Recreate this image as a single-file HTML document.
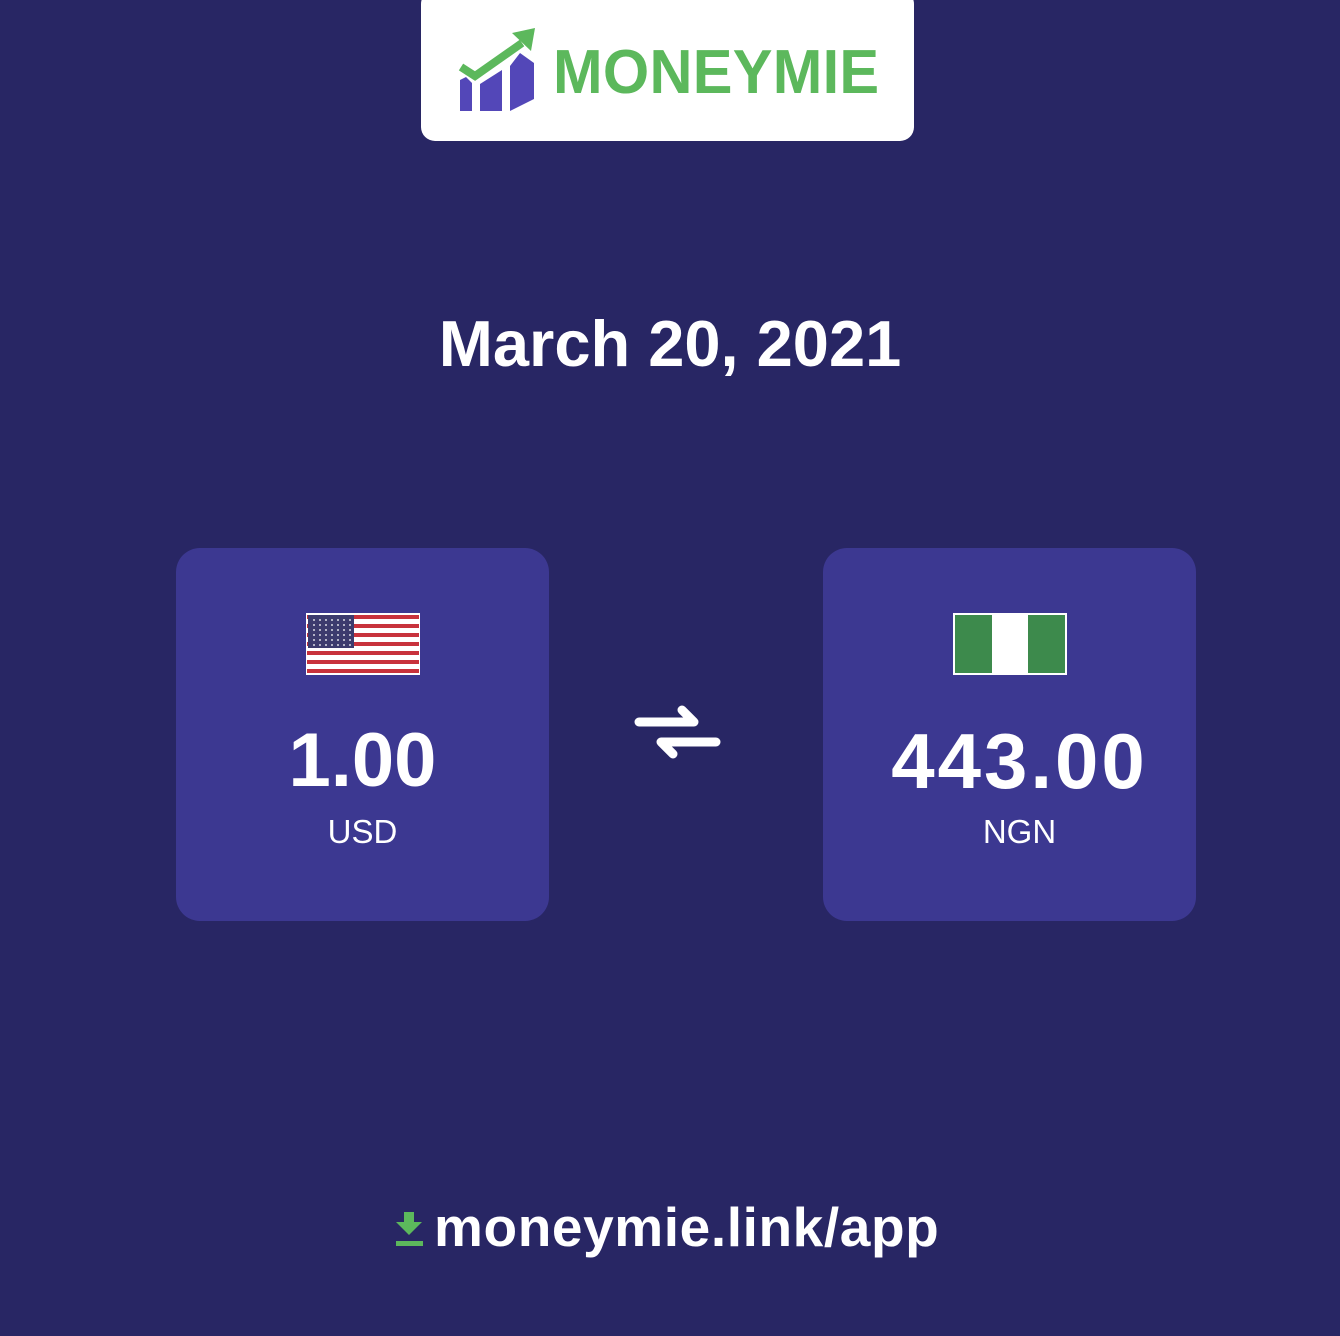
<!DOCTYPE html>
<html><head><meta charset="utf-8"><style>
html,body{margin:0;padding:0}
body{width:1340px;height:1336px;background:#282664;position:relative;overflow:hidden;font-family:"Liberation Sans",sans-serif;color:#fff}
.logo{position:absolute;left:421px;top:-10px;width:493px;height:151px;background:#fff;border-radius:14px}
.lt{position:absolute;left:553px;top:40px;font-size:62px;font-weight:bold;color:#5cb85c;letter-spacing:0.3px;transform:scaleX(0.96);transform-origin:left top;line-height:66px}
.date{position:absolute;left:0;width:1340px;top:304px;text-align:center;font-size:65px;font-weight:bold;line-height:80px}
.card{position:absolute;top:548px;width:373px;height:373px;background:#3c3891;border-radius:24px}
.num{position:absolute;left:0;width:100%;top:718px;text-align:center;font-size:76px;font-weight:bold;line-height:86px}
.cur{position:absolute;left:0;width:100%;top:812px;text-align:center;font-size:33px;line-height:40px}
.foot{position:absolute;left:434px;top:1192px;font-size:55px;font-weight:bold;line-height:70px;letter-spacing:0.6px}
</style></head><body>
<div class="logo"></div>
<svg style="position:absolute;left:0;top:0" width="1340" height="150">
<polyline points="461,67 475,76 522,43" fill="none" stroke="#5cb85c" stroke-width="8" stroke-linejoin="miter"/>
<polygon points="512,33 535,28 531,51" fill="#5cb85c"/>
<polygon points="460,80 466,77 472,83 472,111 460,111" fill="#5347b8"/>
<polygon points="480,84 502,70 502,111 480,111" fill="#5347b8"/>
<polygon points="510,66 520,53 534,63 534,99 510,111" fill="#5347b8"/>
</svg>
<div class="lt">MONEYMIE</div>
<div class="date">March 20, 2021</div>
<div class="card" style="left:176px"></div>
<div class="card" style="left:823px"></div>
<svg style="position:absolute;left:306px;top:613px" width="114" height="62">
<rect x="0" y="0" width="114" height="62" fill="#fff"/>
<g fill="#c8323c">
<rect x="1" y="2" width="112" height="4"/><rect x="1" y="11" width="112" height="4"/><rect x="1" y="20" width="112" height="4"/><rect x="1" y="29" width="112" height="4"/><rect x="1" y="38" width="112" height="4"/><rect x="1" y="47" width="112" height="4"/><rect x="1" y="56" width="112" height="4"/>
</g>
<rect x="2" y="2" width="46" height="33" fill="#3c3b6e"/>
<rect x="4" y="4" width="42" height="29" fill="url(#st)" opacity="0.8"/>
<defs><pattern id="st" width="6" height="5" patternUnits="userSpaceOnUse"><circle cx="2" cy="2" r="1" fill="#fff"/></pattern></defs>
</svg>
<svg style="position:absolute;left:953px;top:613px" width="114" height="62">
<rect width="114" height="62" fill="#fff"/>
<rect x="2" y="2" width="37" height="58" fill="#3d8a4c"/>
<rect x="75" y="2" width="37" height="58" fill="#3d8a4c"/>
</svg>
<div style="position:absolute;left:176px;top:0;width:373px;height:900px">
<div class="num">1.00</div><div class="cur">USD</div></div>
<div style="position:absolute;left:833px;top:0;width:373px;height:900px">
<div class="num" style="font-size:78px;letter-spacing:3px">443.00</div><div class="cur">NGN</div></div>
<svg style="position:absolute;left:630px;top:700px" width="100" height="70">
<g fill="none" stroke="#fff" stroke-width="9" stroke-linecap="round" stroke-linejoin="round">
<path d="M9 22 H64 L52 10"/>
<path d="M86 42 H31 L43 54"/>
</g>
</svg>
<svg style="position:absolute;left:395px;top:1212px" width="30" height="36">
<path d="M9 0 H19 V10 H27 L14 23 L1 10 H9 Z" fill="#5cb85c"/>
<rect x="1" y="29" width="27" height="5" fill="#5cb85c"/>
</svg>
<div class="foot">moneymie.link/app</div>
</body></html>
